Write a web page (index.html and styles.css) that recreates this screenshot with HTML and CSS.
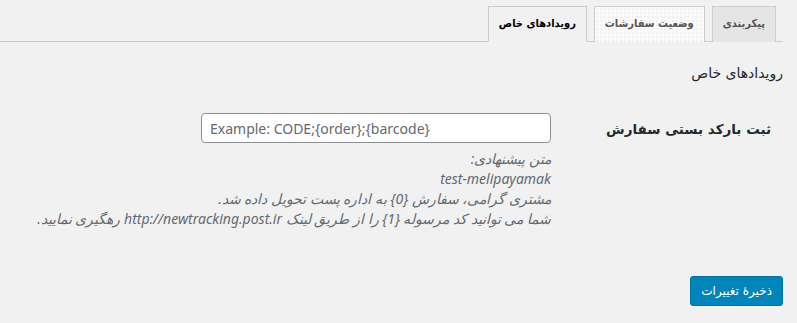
FILE: index.html
```html
<!DOCTYPE html>
<html lang="fa" dir="rtl">
<head>
  <meta charset="UTF-8" />
  <title>رویدادهای خاص</title>
  <link rel="stylesheet" href="styles.css">
</head>
<body>
  <div class="wrap">
    <nav class="nav-tab-wrapper">
      <a class="nav-tab">پیکربندی</a>
      <a class="nav-tab nav-tab-light">وضعیت سفارشات</a>
      <a class="nav-tab nav-tab-active">رویدادهای خاص</a>
    </nav>

    <h2 class="section-title">رویدادهای خاص</h2>

    <div class="form-row">
      <div class="form-label">ثبت بارکد بستی سفارش</div>
      <div class="form-field">
        <input type="text" class="regular-text" placeholder="Example: CODE;{order};{barcode}" dir="ltr" />
        <p class="description">
          متن پیشنهادی:<br>
          test-melipayamak<br>
          مشتری گرامی، سفارش {0} به اداره پست تحویل داده شد.<br>
          شما می توانید کد مرسوله {1} را از طریق لینک http://newtracking.post.ir رهگیری نمایید.
        </p>
      </div>
    </div>

    <div class="submit-row">
      <button class="button-primary">ذخیرهٔ تغییرات</button>
    </div>
  </div>
</body>
</html>
```

FILE: styles.css
```css
body {
  margin: 0;
  background: #f1f1f1;
  color: #23282d;
  font-family: "Noto Sans", "DejaVu Sans", sans-serif;
  font-size: 13px;
}

.wrap {
  margin-right: 14px;
}

.nav-tab-wrapper {
  display: flex;
  padding-top: 6px;
  border-bottom: 1px solid #ccc;
}

.nav-tab {
  margin-right: 7px;
  margin-bottom: -1px;
  padding: 5px 10px;
  border: 1px solid #ccc;
  border-bottom: none;
  background: #e5e5e5;
  color: #555;
  font-family: "DejaVu Sans Condensed", "DejaVu Sans", sans-serif;
  font-stretch: condensed;
  font-size: 11px;
  font-weight: bold;
  line-height: 24px;
  text-decoration: none;
}

.nav-tab-light {
  background-color: #fafafa;
  background-image: radial-gradient(#e6e6e6 0.6px, transparent 0.8px);
  background-size: 4px 4px;
}

.nav-tab-active {
  background: #f1f1f1;
  color: #000;
  border-bottom: 1px solid #f1f1f1;
}

.section-title {
  margin: 21px 0 0;
  font-family: "DejaVu Sans", sans-serif;
  font-size: 14px;
  font-weight: normal;
  line-height: 20px;
  color: #23282d;
}

.form-row {
  display: flex;
  margin-top: 30px;
}

.form-label {
  width: 220px;
  padding-right: 12px;
  padding-top: 8px;
  font-family: "DejaVu Sans", sans-serif;
  font-size: 13.5px;
  font-weight: 600;
  color: #23282d;
}

.form-field {
  width: 350px;
}

.regular-text {
  box-sizing: border-box;
  width: 350px;
  height: 30px;
  margin: 0;
  padding: 0 8px;
  border: 1px solid #8c8f94;
  border-radius: 4px;
  background: #fff;
  font-family: "Noto Sans", sans-serif;
  font-size: 14px;
}

.regular-text::placeholder {
  color: #646970;
}

.description {
  margin: 6px 0 0;
  white-space: nowrap;
  font-style: italic;
  font-size: 14px;
  line-height: 20px;
  color: #646970;
}

.submit-row {
  margin-top: 47px;
  display: flex;
}

.button-primary {
  height: 30px;
  padding: 0 10px;
  border: 1px solid #0073aa;
  border-radius: 3px;
  background: #0085ba;
  color: #fff;
  font-family: "DejaVu Sans", sans-serif;
  font-size: 12px;
  cursor: pointer;
}
```
